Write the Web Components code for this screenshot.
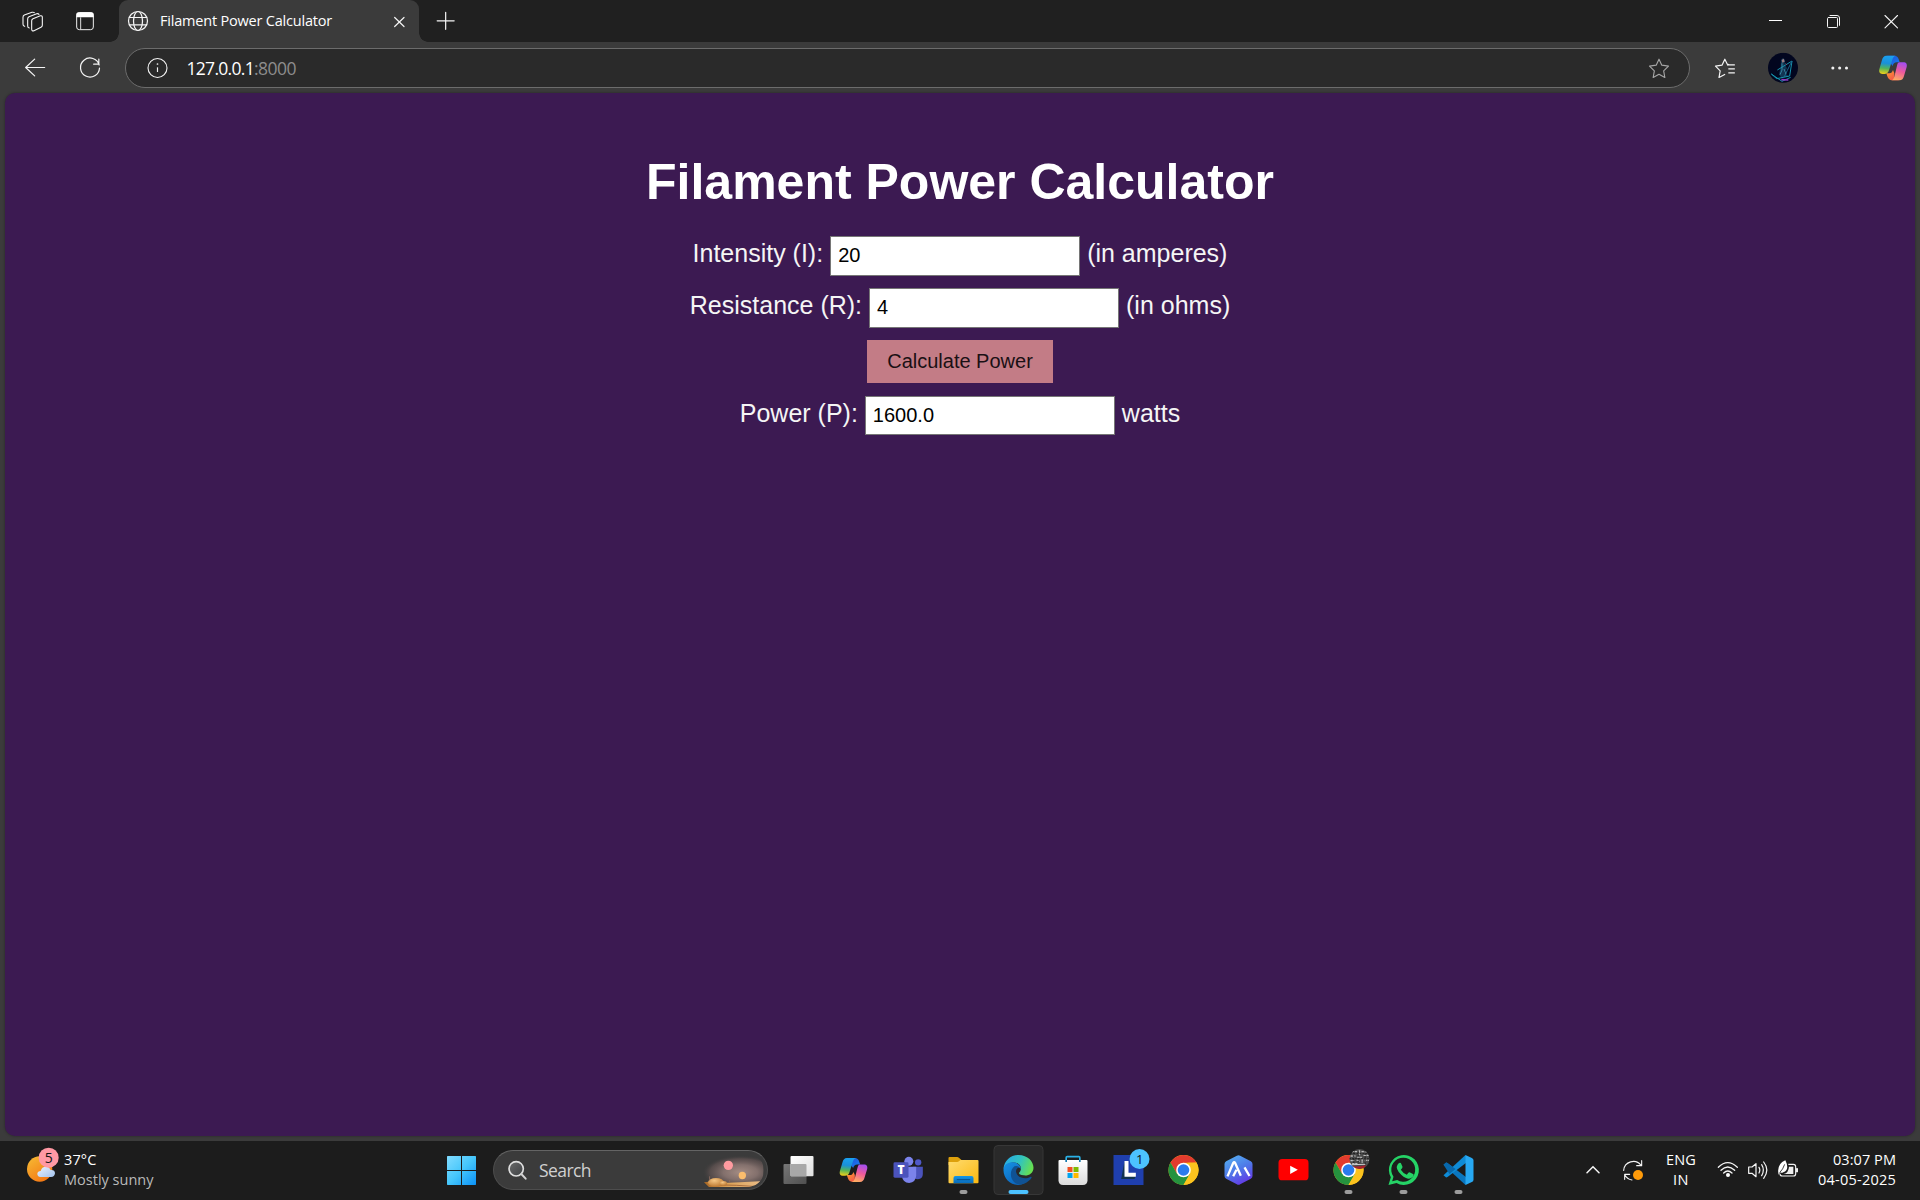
<!DOCTYPE html>
<html lang="en">
<head>
<meta charset="utf-8">
<title>Filament Power Calculator</title>
<style>
html,body{margin:0;height:100%;background:#1c1c1c;overflow:hidden}
body{font-family:"Open Sans","Noto Sans",sans-serif}
</style>
</head>
<body>
<desktop-screen></desktop-screen>
<script>
const define = (name, css, html, ready) => {
  const t = document.createElement('template');
  t.innerHTML = `<style>*{box-sizing:border-box}${css}</style>${html}`;
  customElements.define(name, class extends HTMLElement {
    connectedCallback() {
      if (this.shadowRoot) return;
      this.attachShadow({ mode: 'open' }).append(t.content.cloneNode(true));
      if (ready) ready.call(this, this.shadowRoot);
    }
  });
};

/* Drawings are on a grid of three units per pixel: [viewBox, markup] */
const copilot = (id) => `
<defs>
<linearGradient id="${id}a" x1="0.3" y1="0" x2="0.2" y2="1"><stop offset="0" stop-color="#1aa0f0"/><stop offset=".4" stop-color="#1a90d8"/><stop offset=".68" stop-color="#52b45a"/><stop offset="1" stop-color="#f5d016"/></linearGradient>
<linearGradient id="${id}b" x1="0.7" y1="0" x2="0.4" y2="1"><stop offset="0" stop-color="#a44df0"/><stop offset=".5" stop-color="#ee5a9c"/><stop offset="1" stop-color="#fdab62"/></linearGradient>
<linearGradient id="${id}c" x1="0" y1="0" x2="1" y2="1"><stop offset="0" stop-color="#1c50d8"/><stop offset="1" stop-color="#1b7ff0"/></linearGradient>
<linearGradient id="${id}d" x1="0" y1="0" x2="1" y2="1"><stop offset="0" stop-color="#ffa52e"/><stop offset="1" stop-color="#ee3a52"/></linearGradient></defs>
<path fill="url(#${id}c)" d="M24 2H46C53 2 57 6 59 13L62 22H53C46 22 43 26 41 33L34 24L36 10Z"/>
<path fill="url(#${id}d)" d="M60 76H40C31 76 27 71 25 64L22 55H31C37 55 40 51 42 45L46 55L46 70Z"/>
<path fill="url(#${id}a)" d="M22 2H50C44 3 42 8 40 14L30 46C28 53 23 57 16 57H10C2 57-1 51 1 43L9 15C11 7 15 2 22 2Z"/>
<path fill="url(#${id}b)" d="M62 22H73C82 22 85 28 83 36L75 63C73 71 69 76 61 76H36C42 75 44 71 46 65L54 32C56 25 57 22 62 22Z"/>`;
const chrome = `
<circle cx="0" cy="0" r="45" fill="#fbc116"/>
<path d="M0-22H39.5A45 45 0 0 0-39-22.5L-19.5 11Z" fill="#e33b2e"/>
<path d="M-39-22.5A45 45 0 0 0 0 45L19.5 11L0 0L-19.5 11Z" fill="#25923e"/>
<path d="M39-22.5A45 45 0 0 1 0 45L19.5 11L12-22Z" fill="#fcc31e"/>
<circle cx="0" cy="0" r="22" fill="#fff"/><circle cx="0" cy="0" r="17.5" fill="#2a7bee"/>`;
const dot = x => `<rect x="${x-12}" y="180" width="24" height="12" rx="6" fill="#9c9c9c"/>`;
const pen = (width = 3.6, color = '#f5f5f5') => `fill="none" stroke="${color}" stroke-width="${width}" stroke-linecap="round" stroke-linejoin="round"`;
const W = pen();
const star = 'M236 177.5L244.500 195.500L264.500 198.500L250 212.500L253.500 232.500L236 223L218.500 232.500L222 212.500L207.500 198.500L227.500 195.500Z';
const ICONS = {
  workspaces: ['63 0 69 126', `<g ${pen(3.3)}><path d="M99 56L121 47.500Q127 46 127 52V76Q127 80 123 82L102 92Q95 94 95 88V62Q95 58 99 56Z"/><path d="M88 84Q83 83 83 78V57Q83 52 87 50L110 41Q115 40 117 43"/><path d="M74 79Q69 78 69 73V52Q69 47 73 45L96 37Q101 36 103 38"/></g>`],
  vtabs: ['225 0 60 126', `<rect x="230" y="38" width="50" height="51" rx="8" fill="none" stroke="#eee" stroke-width="3"/><path d="M229 52V44Q229 37 237 37H273Q281 37 281 44V52Z" fill="#fff"/><path d="M242 52V88" stroke="#ddd" stroke-width="3"/>`],
  globe: ['381 0 66 126', `<g ${pen(3.7)}><circle cx="414" cy="63" r="28.500"/><ellipse cx="414" cy="63" rx="13.500" ry="28.500"/><path d="M388 52.500H440M388 74.500H440"/></g>`],
  tabclose: ['1176 0 45 126', `<path d="M1184 52.500L1212 79.500M1212 52.500L1184 79.500" ${W}/>`],
  plus: ['1305 0 63 126', `<path d="M1337 37V88M1311.500 62.500H1362.500" ${W}/>`],
  min: ['498 0 174 126', `<path d="M567 61.500H606" stroke="#fff" stroke-width="3"/>`],
  restore: ['672 0 174 126', `<g ${pen(3)}><rect x="742.500" y="52.500" width="30" height="30" rx="3"/><path d="M750 46.500H771Q778.500 46.500 778.500 54V76"/></g>`],
  close: ['846 0 174 126', `<path d="M915 46.500L952.500 83.500M952.500 46.500L915 83.500" ${pen(3.3)}/>`],
  back: ['72 126 66 153', `<path d="M134 202.500H77M104 177.500L77 202.500L104 227.500" ${W}/>`],
  reload: ['237 126 66 153', `<path d="M297.500 195A28.500 28.500 0 1 0 298.500 204M296.500 177V192.500H281" ${W}/>`],
  info: ['441 126 66 153', `<circle cx="472.500" cy="204" r="28.500" ${pen(3.3)}/><path d="M472.500 202V216" stroke="#f2f2f2" stroke-width="3.500"/><circle cx="472.500" cy="192" r="2.600" fill="#f2f2f2"/>`],
  star: ['203 126 66 153', `<path d="${star}" ${pen(3.4, '#a6a6a6')}/>`],
  favs: ['402 126 66 153', `<g ${W}><path d="M446 193L443.500 195.500L434.500 177.500L426 195.500L406.500 198.500L420.500 212.500L417 232.500L434 223.500"/><path d="M445 194.500H464.500M445 206.500H464.500M445 218.500H464.500" stroke-linecap="butt"/></g>`],
  dots: ['750 126 60 153', `<g fill="#f2f2f2"><circle cx="758.500" cy="204" r="4.600"/><circle cx="779" cy="204" r="4.600"/><circle cx="799.500" cy="204" r="4.600"/></g>`],
  avatar: ['564 126 90 153', `<clipPath id="c"><circle cx="609" cy="203.500" r="45"/></clipPath><g clip-path="url(#c)"><rect x="564" y="158" width="90" height="92" fill="#02061f"/><path d="M603 180Q609 170 615 180L614 193L621 205L614 218L625 228L604 234L597 222L602 203Z" fill="#123553"/><g fill="none" stroke="#1594ae" stroke-width="3"><path d="M592 210L636 183L629 228L590 236L574 222L606 244L632 232"/><path d="M636 183L622 211L612 232" stroke="#1d668c"/></g><path d="M606 190V210L600 224M612 207L618 222" stroke="#3c93b0" stroke-width="2.500" fill="none"/><path d="M605 180L611 176L614 185L607 188Z" fill="#9a7c80"/><path d="M604 239L625 240" stroke="#8f38be" stroke-width="5"/><path d="M616 190L621 195" stroke="#a04c6a" stroke-width="2"/></g>`],
  copilottop: ['894 126 90 153', `<g transform="translate(897 165)">${copilot('t')}</g>`],
  start: ['48 33 93 177', `<defs><linearGradient id="g" x1="50" y1="78" x2="138" y2="166" gradientUnits="userSpaceOnUse"><stop offset="0" stop-color="#82dcff"/><stop offset=".5" stop-color="#45c6fb"/><stop offset="1" stop-color="#0a90f6"/></linearGradient></defs><path fill="url(#g)" d="M53 78H93V120H51V80Q51 78 53 78ZM96 78H136Q138 78 138 80V120H96ZM51 123H93V165H53Q51 165 51 163ZM96 123H138V163Q138 165 136 165H96Z"/>`],
  magnifier: ['230 33 66 177', `<defs><linearGradient id="g" x1="0" y1="0" x2="1" y2="1"><stop offset="0" stop-color="#6a6a6a"/><stop offset="1" stop-color="#3e4144"/></linearGradient></defs><circle cx="257.500" cy="116.500" r="21.500" fill="url(#g)" stroke="#dedede" stroke-width="5"/><path d="M273 132L286 146" stroke="#d2d2d2" stroke-width="6" stroke-linecap="round"/>`],
  scene: ['804 33 201 177', `<defs><radialGradient id="g" cx=".58" cy=".52" r=".52"><stop offset="0" stop-color="#a58d84"/><stop offset=".45" stop-color="#8b7672" stop-opacity=".9"/><stop offset=".8" stop-color="#685756" stop-opacity=".6"/><stop offset="1" stop-color="#3d3b3b" stop-opacity="0"/></radialGradient><linearGradient id="s" x1="0" y1="0" x2="1" y2="0"><stop offset="0" stop-color="#a86724"/><stop offset=".4" stop-color="#dba258"/><stop offset="1" stop-color="#e9bd8a"/></linearGradient><radialGradient id="b" cx=".4" cy=".3" r=".8"><stop offset="0" stop-color="#f5c684"/><stop offset="1" stop-color="#b66f27"/></radialGradient><clipPath id="c"><path d="M804 76H957Q1001 80 1001 121Q1001 163 957 171H820V76Z"/></clipPath></defs><g clip-path="url(#c)"><rect x="804" y="76" width="220" height="98" fill="url(#g)"/><path d="M822 157Q840 152 858 160Q930 157 1004 153L985 172H838Z" fill="url(#s)"/><path d="M842 164L920 166L984 170" stroke="#8c4d25" stroke-width="2" fill="none"/><ellipse cx="858" cy="157" rx="24" ry="13" fill="url(#b)"/><ellipse cx="880" cy="160" rx="11" ry="7" fill="url(#b)"/><path d="M839 151V139M899 158V150" stroke="#8b695c" stroke-width="3"/></g><circle cx="895" cy="106" r="14" fill="#ff9ba0"/><circle cx="937" cy="136.500" r="11" fill="#fbbd6d"/>`],
  taskview: ['1.5 33 165 177', `<defs><linearGradient id="g" x1="0" y1="0" x2="1" y2="1"><stop offset="0" stop-color="#fff"/><stop offset="1" stop-color="#dedede"/></linearGradient><linearGradient id="h" x1="0" y1="0" x2="1" y2="1"><stop offset="0" stop-color="#777"/><stop offset="1" stop-color="#4f4f4f"/></linearGradient></defs><rect x="39" y="102" width="69" height="60" rx="3" fill="url(#h)"/><rect x="60" y="78" width="69" height="61" rx="3" fill="url(#g)"/><path d="M60 102H105Q108 102 108 105V139H62Q60 139 60 136Z" fill="#a8a8a8"/>`],
  copilot: ['166.5 33 165 177', `<g transform="translate(207 82) scale(1 .97)">${copilot('u')}</g>`],
  teams: ['331.5 33 165 177', `<circle cx="415" cy="94" r="13.500" fill="#7b83eb"/><circle cx="443" cy="97" r="9.500" fill="#5059c9"/><path d="M427 110H457V132Q457 147 442 148Q430 148 427 136Z" fill="#4b53bc"/><path d="M394 110H437V136Q436 158 416 159Q397 158 394 138Z" fill="#7b83eb"/><rect x="369" y="97" width="45" height="46" rx="4" fill="#4b53bc"/><text x="391.500" y="133" text-anchor="middle" font-family="Open Sans" font-weight="800" font-size="36" fill="#fff">T</text>`],
  explorer: ['496.500 33 165 177', `<defs><linearGradient id="g" x1="0" y1="0" x2="1" y2="1"><stop offset="0" stop-color="#ffdc70"/><stop offset="1" stop-color="#fbb810"/></linearGradient><linearGradient id="h" x1="0" y1="0" x2="0" y2="1"><stop offset="0" stop-color="#1697e6"/><stop offset="1" stop-color="#0869b8"/></linearGradient></defs><path d="M534 84Q534 81 537 81H560Q563 81 566 84L573 90V105H534Z" fill="#dda00c"/><path d="M534 96H560Q563 96 566 93L570 90H621Q624 90 624 93V157Q624 160 621 160H537Q534 160 534 157Z" fill="url(#g)"/><path d="M549 160V144Q549 138 555 138H603Q609 138 609 144V160Z" fill="url(#h)"/><path d="M559 149H599" stroke="#09508d" stroke-width="3"/>${dot(579)}`],
  edge: ['1.500 33 165 177', `<defs><linearGradient id="g" x1="0" y1=".2" x2="1" y2=".5"><stop offset="0" stop-color="#27a9e8"/><stop offset=".55" stop-color="#32c4bd"/><stop offset="1" stop-color="#67e04f"/></linearGradient><linearGradient id="h" x1="0" y1="0" x2=".6" y2="1"><stop offset="0" stop-color="#1692e4"/><stop offset="1" stop-color="#0c66bd"/></linearGradient></defs><rect x="10.500" y="46.500" width="147" height="147" rx="12" fill="#292929" stroke="#373737" stroke-width="3"/><path d="M39 117C41 91 60 75 84 75C112 75 129 95 129 113C129 130 114 138 99 136C88 135 83 131 87 127C93 120 94 108 83 101C68 93 49 99 39 117Z" fill="url(#g)"/><path d="M39 119C40 103 55 96 68 97C82 98 93 109 91 119C90 110 72 106 66 122C60 140 76 163 96 163C90 165 86 165 82 165C57 164 38 143 39 119Z" fill="url(#h)"/><path d="M72 109C57 120 55 151 82 163Q88 165 94 163C108 160 119 150 123 143C124 140 121 140 119 141C105 149 80 144 77 127C75 118 82 114 86 111Q79 106 72 109Z" fill="#105293"/><rect x="54" y="180" width="60" height="12" rx="6" fill="#4cc2ff"/>`],
  store: ['166.500 33 165 177', `<defs><linearGradient id="g" x1="0" y1="0" x2="0" y2="1"><stop offset="0" stop-color="#fff"/><stop offset="1" stop-color="#dcdcdc"/></linearGradient></defs><path d="M227 96V83Q227 80 230 80H265Q268 80 268 83V96" fill="none" stroke="#2ab1e6" stroke-width="5"/><path d="M207 90H288Q291 90 291 93V151Q291 165 277 165H218Q204 165 204 151V93Q204 90 207 90Z" fill="url(#g)"/><path d="M227 90V96M268 90V96" stroke="#157baf" stroke-width="5"/><path d="M231 111H246V126H231Z" fill="#f25022"/><path d="M249 111H264V126H249Z" fill="#7fba00"/><path d="M231 129H246V144H231Z" fill="#00a4ef"/><path d="M249 129H264V144H249Z" fill="#ffb900"/>`],
  lapp: ['331.500 33 165 177', `<rect x="369" y="75" width="90" height="90" fill="#1f3fae"/><path d="M402 94L392 147H432L436 139L406 127Z" fill="#12334f"/><path d="M402 93H414V128H436V140H402Z" fill="#fff"/><circle cx="447" cy="87" r="30" fill="#4cc2ff"/><text x="448" y="101" text-anchor="middle" font-family="Open Sans" font-size="39" fill="#111">1</text>`],
  chrome: ['496.500 33 165 177', `<g transform="translate(579 120)">${chrome}</g>`],
  hexa: ['1.500 33 165 177', `<defs><linearGradient id="g" x1=".2" y1="0" x2=".7" y2="1"><stop offset="0" stop-color="#55aef0"/><stop offset=".5" stop-color="#4e79e8"/><stop offset="1" stop-color="#6535e6"/></linearGradient></defs><path d="M79 77Q84 74 89 77L121 94Q126 97 126 102V138Q126 143 121 146L89 163Q84 166 79 163L47 146Q42 143 42 138V102Q42 97 47 94Z" fill="url(#g)"/><path d="M51 139L68 99Q71 94 74 99L91 137M68 139L78 119M102 112L117 138" fill="none" stroke="#fff" stroke-width="7"/>`],
  youtube: ['166.500 33 165 177', `<rect x="204" y="87" width="90" height="64" rx="11" fill="#f00"/><path d="M239 107L262 119.500L239 132Z" fill="#fff"/>`],
  chrome2: ['331.500 33 165 177', `<g transform="translate(414 120)">${chrome}</g><clipPath id="c"><circle cx="447" cy="87" r="30"/></clipPath><g clip-path="url(#c)"><rect x="415" y="56" width="64" height="64" fill="#4c4c4c"/><g stroke="#bdbdbd" fill="none" stroke-width="4"><path d="M424 65H440M447 61V76M453 65H470M420 78H435M440 82H454M459 76H475M420 92H431M438 90L448 94M455 88V99M462 91H475M425 101H442" stroke-dasharray="7 2"/></g><g stroke="#1d1d1d" stroke-width="3"><path d="M430 58V103M443 65V104M464 61V108M416 86H478M420 71H476" stroke-dasharray="5 4"/></g><path d="M417 107Q440 112 466 106L460 119H424Z" fill="#a8202b"/><path d="M424 104L464 103" stroke="#ccc" stroke-width="3"/></g>${dot(414)}`],
  whatsapp: ['496.500 33 165 177', `<path d="M534 165L541 142A45 45 0 1 1 558 159Z" fill="#25d366"/><path d="M545 154L549 140A36 36 0 1 1 560 150Z" fill="#1c1c1c"/><path d="M561 104Q566 96 571 99L576 110Q577 113 571 119Q578 130 589 134Q594 127 597 127L609 133Q611 140 601 145Q590 150 573 135Q553 116 561 104Z" fill="#25d366"/>${dot(579)}`],
  vscode: ['661.500 33 165 177', `<path d="M699 104L706 98Q708 97 711 99L774 147L765 165Z" fill="#0a76bf"/><path d="M699 136L706 142Q708 143 711 141L774 93L765 75Z" fill="#0f8bd6"/><path d="M699 104L706 98Q708 97 711 99L735 117L717 132Z" fill="#0868ac"/><path d="M765 75L784 84Q789 86 789 91V149Q789 154 784 156L765 165Z" fill="#27a8f2"/>${dot(744)}`],
  weather: ['78 63 102 177', `<defs><linearGradient id="g" x1="0" y1="0" x2=".7" y2="1"><stop offset="0" stop-color="#f6bd35"/><stop offset="1" stop-color="#f47613"/></linearGradient><linearGradient id="h" x1="0" y1="0" x2="1" y2="1"><stop offset="0" stop-color="#edf4fe"/><stop offset="1" stop-color="#a2c2ee"/></linearGradient></defs><circle cx="119" cy="147" r="38" fill="url(#g)"/><path d="M121 171Q112 169 112 161Q113 153 122 153Q125 140 138 140Q148 140 152 150Q165 149 165 160Q164 171 153 171Z" fill="url(#h)"/><circle cx="146" cy="113" r="30" fill="#ff99a4"/><text x="146" y="128" text-anchor="middle" font-family="Open Sans" font-size="42" fill="#151515">5</text>`],
  chevron: ['75 63 48 177', `<path d="M81 158L99 140L117 158" ${pen(4.5)}/>`],
  sync: ['186 63 66 177', `<g ${pen(3.3)}><path d="M191 151A29 29 0 0 1 243 136M245 122V137H230M194 178V163H209M194 164Q201 177 216 180"/></g><circle cx="234" cy="165" r="15" fill="#ff9b0a"/>`],
  wifi: ['471 63 66 177', `<g ${pen(3.9)}><path d="M475 142Q503 114 532 142M483 151Q503 131 524 151M491 159Q503 147 516 159"/></g><circle cx="504" cy="165" r="6" fill="#fff"/>`],
  speaker: ['561 63 69 177', `<g ${W}><path d="M566 141H576L588 131V170L576 160H566Z"/><path d="M597 142Q602 150 597 159M605 134Q615 150 605 167M611 126Q630 150 611 175"/></g>`],
  battery: ['651 63 66 177', `<path d="M685 133H700Q707 133 707 140V161Q707 168 700 168H667Q660 168 660 161" fill="none" stroke="#f2f2f2" stroke-width="3.500"/><rect x="708" y="144" width="6" height="13" rx="2" fill="#eee"/><path d="M687 140H700V162H671Q686 158 687 140Z" fill="#eee"/><path d="M655 159Q651 132 676 121Q690 149 670 157Q664 160 661 157L656 164Z" fill="#fff"/><path d="M659 158Q669 148 674 133" stroke="#1c1c1c" stroke-width="2.500" fill="none"/>`]
};
customElements.define('ui-icon', class extends HTMLElement {
  connectedCallback() {
    if (this.shadowRoot) return;
    const [vb, art] = ICONS[this.getAttribute('name')];
    const [, , w, h] = vb.split(' ').map(Number);
    this.attachShadow({ mode: 'open' }).innerHTML =
      `<style>:host{display:block;flex:none;width:${w/3}px;height:${h/3}px}svg{display:block}</style>
       <svg width="${w/3}" height="${h/3}" viewBox="${vb}" aria-hidden="true">${art}</svg>`;
  }
});

/* One line of text, tracked so that it fills the given width */
define('ui-text', ':host{display:block;white-space:nowrap;flex:none}span{display:inline-block;vertical-align:top}', '<span><slot></slot></span>', function (root) {
  const w = +this.getAttribute('w'), span = root.querySelector('span');
  this.style.width = w + 'px';
  const n = this.textContent.length;
  span.style.letterSpacing = (w - span.getBoundingClientRect().width) / n + 'px';
});

define('tab-strip', `
:host{display:flex;height:42px;background:#202020;padding-left:21px;font-size:14.5px;color:#fff}
ui-icon[name=vtabs]{margin-left:31px}
.curve{width:9px;height:42px;margin-left:15px;background:radial-gradient(circle at 0 calc(100% - 9px),#202020 8.500px,#3b3b3b 9px) bottom/9px 9px no-repeat}
.curve.r{margin:0;background-image:radial-gradient(circle at 100% calc(100% - 9px),#202020 8.500px,#3b3b3b 9px)}
.tab{display:flex;width:300px;background:#3b3b3b;border-radius:9px 9px 0 0;padding-left:8px}
.tab ui-text{margin-left:11px;line-height:20px;padding-top:11px}
.tab ui-icon[name=tabclose]{margin-left:60px}
ui-icon[name=plus]{margin-left:7px}
.space{flex:1}`,
`<ui-icon name="workspaces"></ui-icon><ui-icon name="vtabs"></ui-icon><div class="curve"></div>
<div class="tab"><ui-icon name="globe"></ui-icon><ui-text w="172">Filament Power Calculator</ui-text><ui-icon name="tabclose"></ui-icon></div>
<div class="curve r"></div><ui-icon name="plus"></ui-icon><div class="space"></div>
<ui-icon name="min"></ui-icon><ui-icon name="restore"></ui-icon><ui-icon name="close"></ui-icon>`);

define('address-bar', `
:host{display:flex;width:1565px;height:40px;margin:6px 24px 0 24px;border:1px solid #6c6c6c;border-radius:20px;background:#2a2a2a;align-items:flex-start;font-size:17.5px;flex:none}
ui-icon{margin-top:-7px}
ui-icon[name=info]{margin-left:21px}
ui-text{line-height:24px;padding-top:7px}
ui-text:first-of-type{margin-left:17.500px;color:#fff}
ui-text:nth-of-type(2){color:#8d8d8d}
ui-icon[name=star]{margin-left:auto;margin-right:19px}`,
`<ui-icon name="info"></ui-icon><ui-text w="67.500">127.0.0.1</ui-text><ui-text w="42">:8000</ui-text><ui-icon name="star"></ui-icon>`);

define('browser-toolbar', `
:host{display:flex;height:51px;padding-left:24px;background:#3b3b3b}
ui-icon[name=reload]{margin-left:33px}
ui-icon[name=avatar]{margin-left:32px}
ui-icon[name=dots]{margin-left:32px}
ui-icon[name=copilottop]{margin-left:28px}`,
`<ui-icon name="back"></ui-icon><ui-icon name="reload"></ui-icon><address-bar></address-bar><ui-icon name="favs"></ui-icon><ui-icon name="avatar"></ui-icon><ui-icon name="dots"></ui-icon><ui-icon name="copilottop"></ui-icon>`);

define('field-row', `
:host{display:flex;justify-content:center;align-items:baseline;gap:7px;height:40px;font-size:25px;line-height:29px;color:#f5f5f5}
input{width:250px;height:var(--field-height,40px);padding:1px 7px var(--field-base,3px);border:1px solid #767676;background:#fff;color:#000;font:20px "Liberation Sans",Arial,sans-serif;border-radius:0;outline:0}`,
`<slot name="label"></slot><input type="text"><slot name="unit"></slot>`, function (root) {
  root.querySelector('input').value = this.getAttribute('value');
});

define('power-calculator', `
:host{display:flex;flex-direction:column;align-items:center;flex:1;margin:0 5px 5px;padding-top:61px;border-radius:10px;background:#3c1a52;box-shadow:0 0 3px rgba(0,0,0,.35);font-family:"Liberation Sans",Arial,sans-serif}
h1{margin:0 0 25px;font-size:50px;line-height:57px;color:#fff}
field-row{margin-bottom:12px}
button{width:186px;height:43px;margin-bottom:13px;padding:0;border:0;background:#c37c86;color:#1a1014;font:20px "Liberation Sans",Arial,sans-serif}
field-row:last-child{--field-height:39px;--field-base:1px}`,
`<h1>Filament Power Calculator</h1>
<field-row value="20"><span slot="label">Intensity (I):</span><span slot="unit">(in amperes)</span></field-row>
<field-row value="4"><span slot="label">Resistance (R):</span><span slot="unit">(in ohms)</span></field-row>
<button>Calculate Power</button>
<field-row value="1600.0"><span slot="label">Power (P):</span><span slot="unit">watts</span></field-row>`);

define('search-box', `
:host{display:flex;width:275px;height:40px;margin:9px 2.500px 0 16px;border:1px solid #4d4d4d;border-top-color:#646464;border-radius:20px;background:#3b3b3b;font-size:17.5px;color:#d0d0d0;flex:none}
ui-icon{margin-top:-10px}
ui-icon[name=magnifier]{margin-left:13px}
ui-text{margin-left:10px;line-height:24px;padding-top:7px}
ui-icon[name=scene]{margin-left:auto;margin-right:2.500px}`,
`<ui-icon name="magnifier"></ui-icon><ui-text w="52">Search</ui-text><ui-icon name="scene"></ui-icon>`);

define('task-bar', `
:host{display:flex;height:59px;background:#1c1c1c;color:#fff;font-size:14.5px;line-height:20px}
.weather{display:flex;width:446px;padding-left:26px}
.lines{padding-top:9px}
.weather .lines{padding-left:4px}
.dim{color:#b9b9b9}
.apps{display:flex;flex:1}
.tray{display:flex;width:335px}
ui-icon[name=sync]{margin-left:21px}
.lang{display:flex;flex-direction:column;align-items:center;width:30px;margin:0 20.500px 0 22px}
.tray ui-icon[name=speaker]{margin-left:8px}
.tray ui-icon[name=battery]{margin-left:7px}
.clock{display:flex;flex-direction:column;align-items:flex-end;margin-left:auto;padding-right:24px}`,
`<div class="weather"><ui-icon name="weather"></ui-icon><div class="lines"><ui-text w="32.500">37°C</ui-text><ui-text class="dim" w="89.500">Mostly sunny</ui-text></div></div>
<div class="apps"><ui-icon name="start"></ui-icon><search-box></search-box>
${['taskview','copilot','teams','explorer','edge','store','lapp','chrome','hexa','youtube','chrome2','whatsapp','vscode'].map(n => `<ui-icon name="${n}"></ui-icon>`).join('')}</div>
<div class="tray"><ui-icon name="chevron"></ui-icon><ui-icon name="sync"></ui-icon>
<div class="lines lang"><ui-text w="30">ENG</ui-text><ui-text w="16">IN</ui-text></div>
<ui-icon name="wifi"></ui-icon><ui-icon name="speaker"></ui-icon><ui-icon name="battery"></ui-icon>
<div class="lines clock"><ui-text w="63">03:07 PM</ui-text><ui-text w="78">04-05-2025</ui-text></div></div>`);

define('desktop-screen', `:host{display:flex;flex-direction:column;width:1920px;height:1200px;background:#3b3b3b}`,
`<tab-strip></tab-strip><browser-toolbar></browser-toolbar><power-calculator></power-calculator><task-bar></task-bar>`);
</script>
</body>
</html>
